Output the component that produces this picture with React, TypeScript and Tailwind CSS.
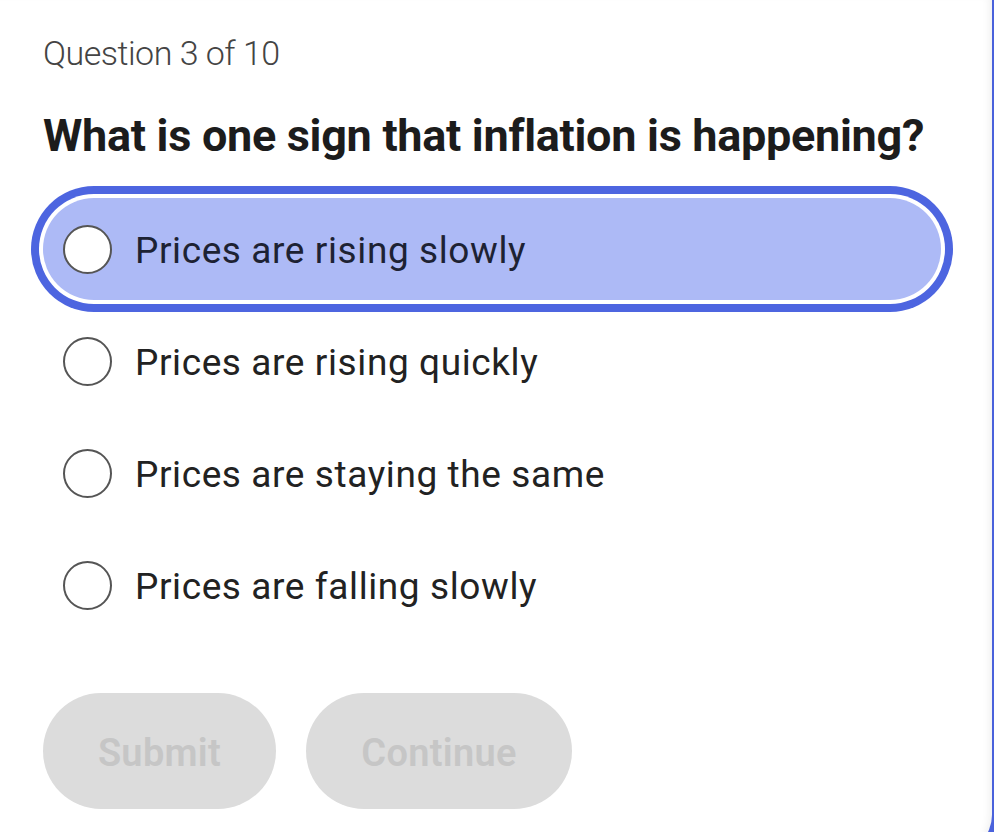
import { useState } from "react";

const OPTIONS = [
  "Prices are rising slowly",
  "Prices are rising quickly",
  "Prices are staying the same",
  "Prices are falling slowly",
];

function Radio() {
  return <span className="h-[49px] w-[49px] shrink-0 rounded-full border-2 border-[#555] bg-white" />;
}

export default function App() {
  const [picked, setPicked] = useState(0);

  return (
    <div className="h-[832px] w-[994px] overflow-hidden bg-[#4a62dc] font-['Roboto',sans-serif]">
      <div className="h-[853px] w-[992px] rounded-br-[38px] bg-white pl-[43px] pt-[36px] shadow-[inset_-8px_0_8px_-6px_rgba(0,0,0,0.07)]">
        <div className="text-[34px] font-light leading-none tracking-[-0.5px] text-[#444]">Question 3 of 10</div>

        <h1 className="mt-[43px] text-[45px] font-bold leading-none tracking-[-0.3px] text-[#1c1c1c]">
          What is one sign that inflation is happening?
        </h1>

        <div className="mt-[40px] flex w-[898px] flex-col gap-[10px]">
          {OPTIONS.map((o, i) => (
            <button
              key={o}
              onClick={() => setPicked(i)}
              className={`flex h-[102px] items-center gap-[23px] rounded-full pl-[20px] text-left ${
                picked === i
                  ? "bg-[#adbaf6] shadow-[0_0_0_4px_#ffffff,0_0_0_12px_#4d65e0] text-[#1d2233]"
                  : "text-[#222]"
              }`}
            >
              <Radio />
              <span className="pt-[2px] text-[37px] leading-none tracking-[0.6px]">{o}</span>
            </button>
          ))}
        </div>

        <div className="mt-[57px] flex gap-[30px]">
          <button className="h-[116px] w-[233px] rounded-full bg-[#dcdcdc] pt-[4px] text-[38px] font-semibold tracking-[0.3px] text-[#c6c6c6]">
            Submit
          </button>
          <button className="h-[116px] w-[266px] rounded-full bg-[#dcdcdc] pt-[4px] text-[38px] font-semibold tracking-[0.3px] text-[#c6c6c6]">
            Continue
          </button>
        </div>
      </div>
    </div>
  );
}
